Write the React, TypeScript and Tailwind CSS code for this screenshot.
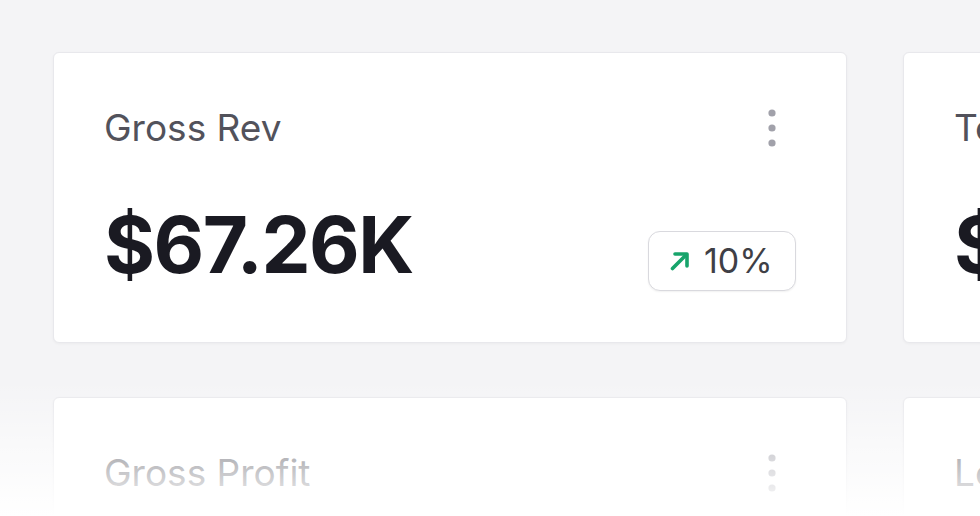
import React from "react";

type Stat = {
  title: string;
  value: string;
  change: string;
};

const stats: Stat[] = [
  { title: "Gross Rev", value: "$67.26K", change: "10%" },
  { title: "Total Orders", value: "$12.48K", change: "4%" },
  { title: "Gross Profit", value: "$31.02K", change: "8%" },
  { title: "Losses", value: "$2.14K", change: "2%" },
];

const MoreDots = () => (
  <svg width="8" height="38" viewBox="0 0 8 38" fill="#a1a1aa">
    <circle cx="4" cy="4" r="3.6" />
    <circle cx="4" cy="19" r="3.6" />
    <circle cx="4" cy="34" r="3.6" />
  </svg>
);

const UpArrow = () => (
  <svg width="22" height="22" viewBox="0 0 22 22" fill="none" stroke="#17a46b" strokeWidth="3.6" strokeLinecap="round" strokeLinejoin="round">
    <path d="M3.5 18.5 17 5" />
    <path d="M6 4h12v12" />
  </svg>
);

const StatCard = ({ stat }: { stat: Stat }) => {
  return (
    <div className="flex flex-col rounded-[6px] border border-[#e8e8ec] bg-white px-[50px] pt-[49px] pb-[51px] shadow-[0_1px_3px_rgba(0,0,0,0.04)]">
      <div className="flex items-start justify-between">
        <p className="mt-[4px] text-[37px] leading-[1.2] text-[#52525b]">{stat.title}</p>
        <button className="mt-[7px] flex w-12 justify-center">
          <MoreDots />
        </button>
      </div>
      <div className="mt-[48px] flex items-end justify-between">
        <h2 className="text-[78px] font-bold leading-[93px] tracking-[-1.5px] text-[#1a1a22]">
          {stat.value}
        </h2>
        <div className="flex h-[60px] w-[148px] items-center gap-[13px] rounded-[12px] border-[1.5px] border-[#d9d9de] bg-white pl-[20px] shadow-[0_1px_2px_rgba(0,0,0,0.06)]">
          <UpArrow />
          <span className="text-[34px] leading-none text-[#3f3f46]">{stat.change}</span>
        </div>
      </div>
    </div>
  );
};

export default function App() {
  return (
    <div
      className="relative h-[516px] w-[980px] overflow-hidden bg-[#f4f4f6]"
      style={{ fontFamily: "Inter, 'Noto Sans', sans-serif" }}
    >
      <div className="grid grid-cols-[794px_794px] gap-x-[56px] gap-y-[54px] pl-[53px] pt-[52px]">
        {stats.map((s) => (
          <StatCard key={s.title} stat={s} />
        ))}
      </div>
      <div className="pointer-events-none absolute inset-x-0 bottom-0 h-[136px] bg-gradient-to-b from-transparent via-white/50 to-white" />
    </div>
  );
}
